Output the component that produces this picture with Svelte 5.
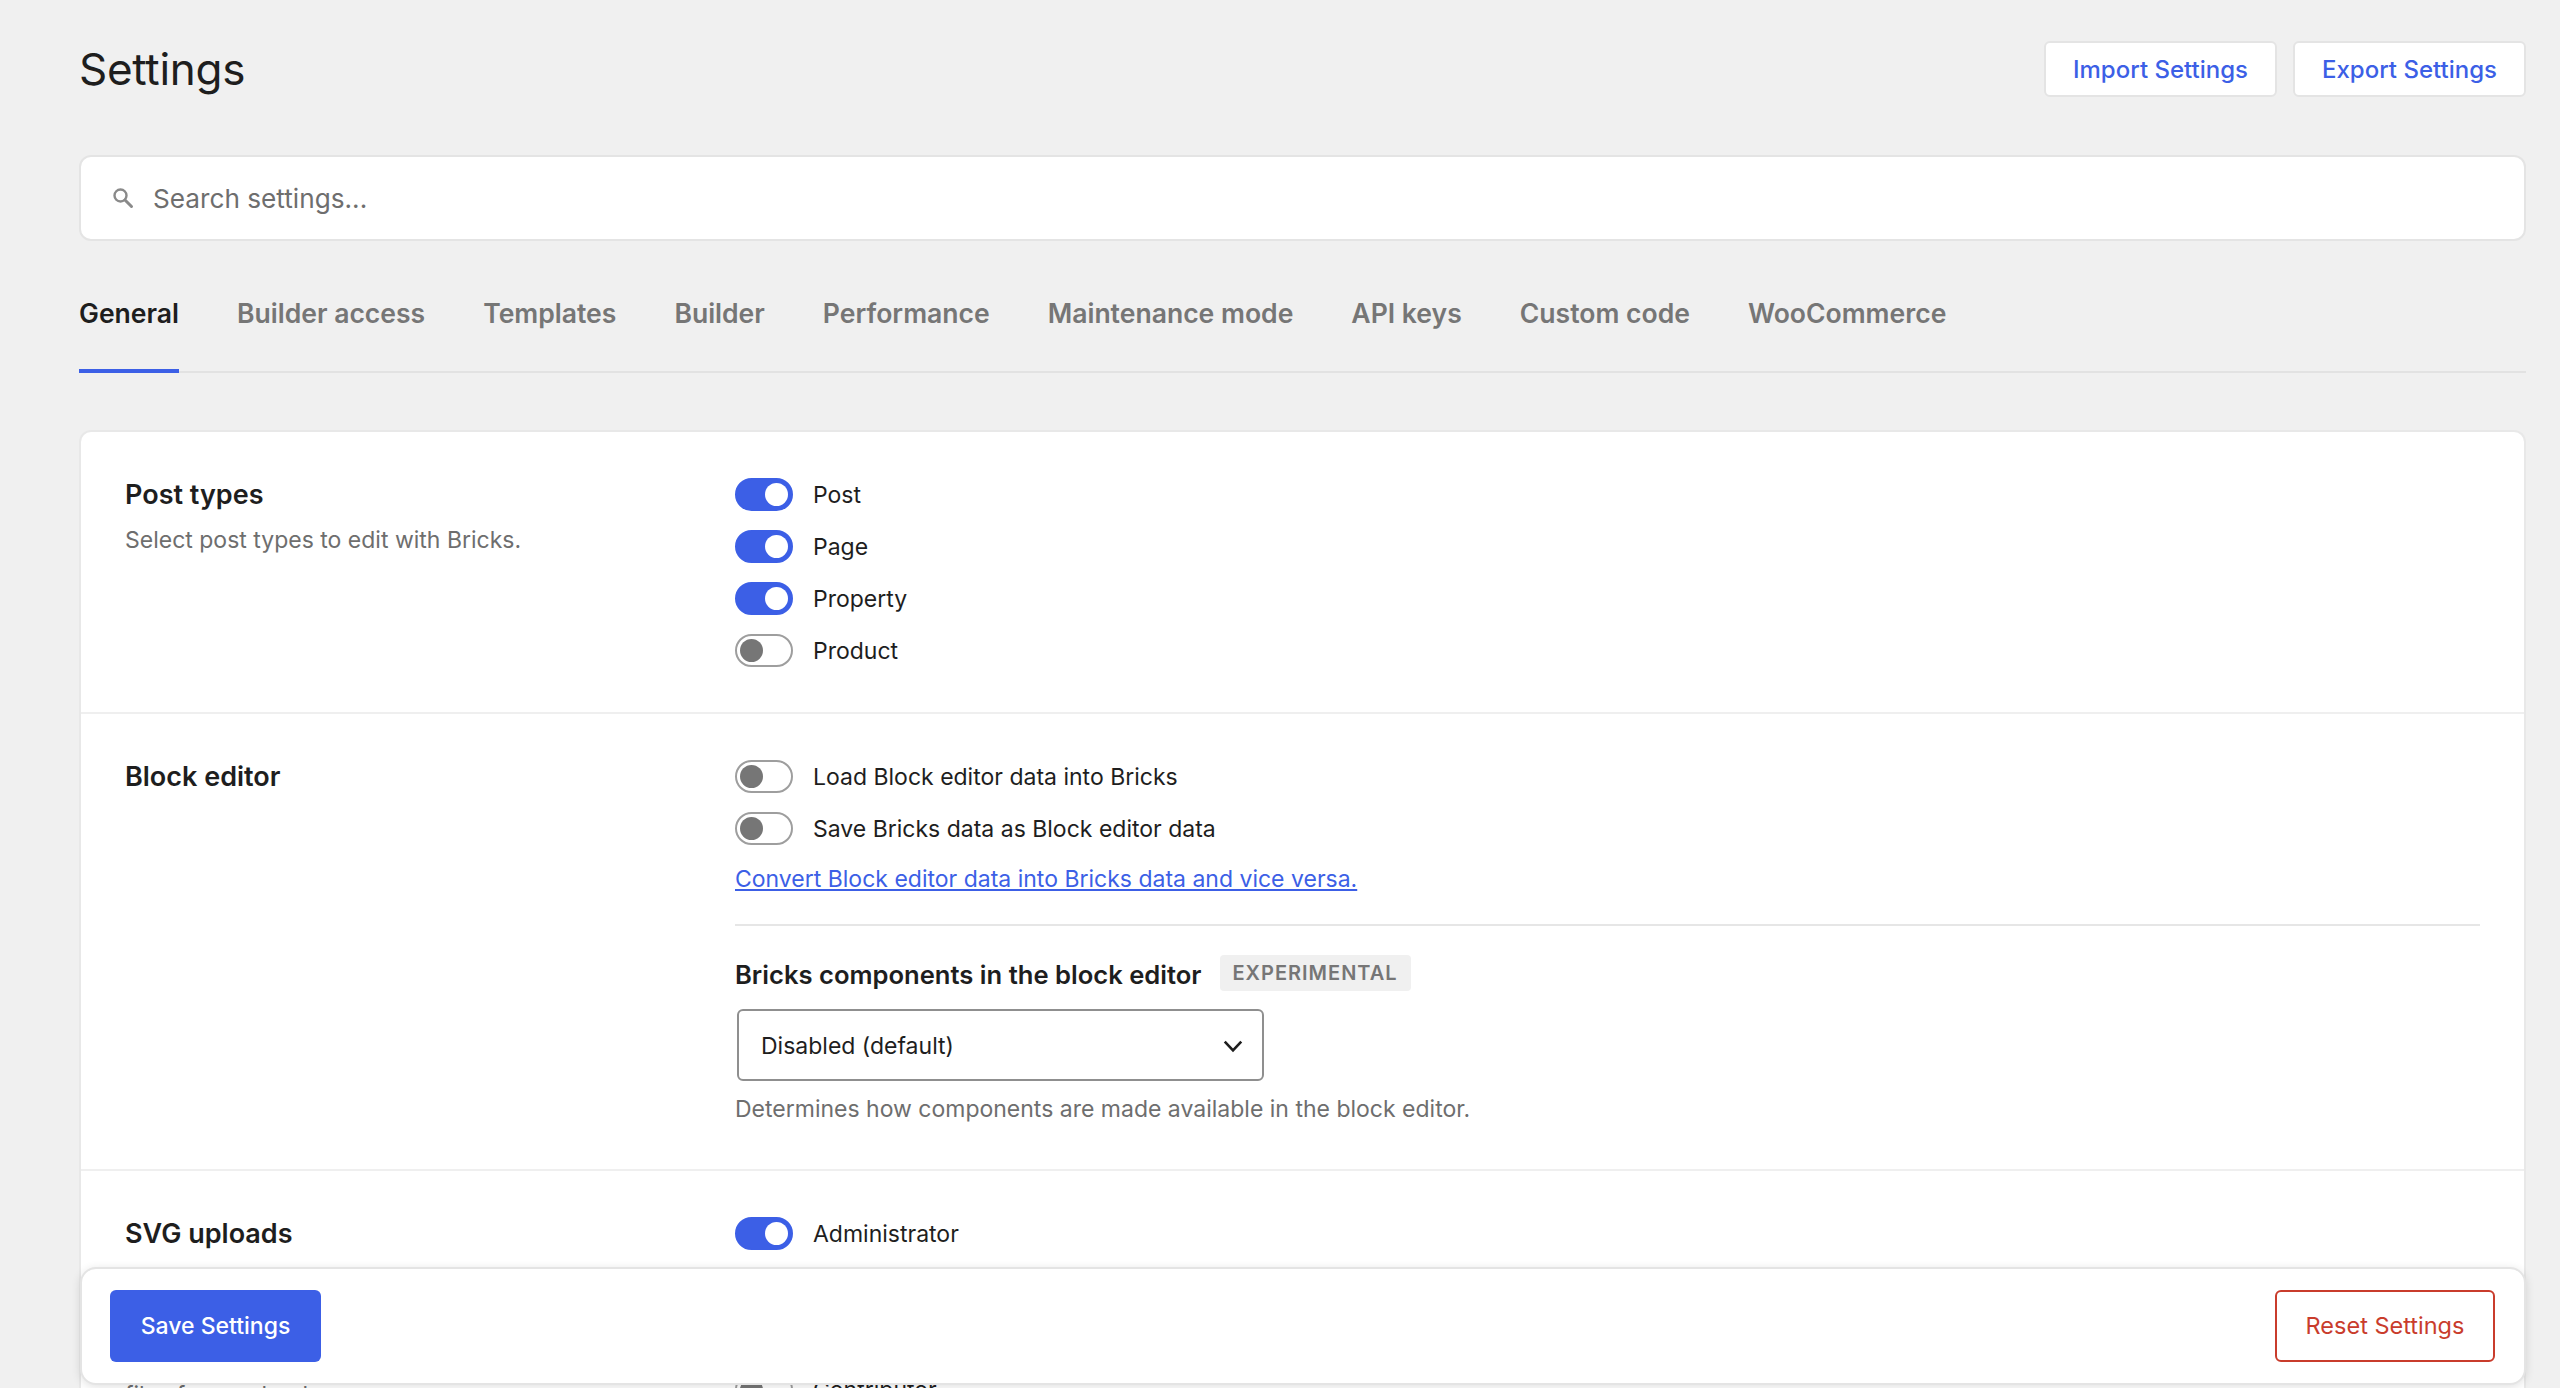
<script>
	const tabs = [
		'General',
		'Builder access',
		'Templates',
		'Builder',
		'Performance',
		'Maintenance mode',
		'API keys',
		'Custom code',
		'WooCommerce'
	];

	const postTypes = [
		{ label: 'Post', on: true },
		{ label: 'Page', on: true },
		{ label: 'Property', on: true },
		{ label: 'Product', on: false }
	];

	const blockEditor = [
		{ label: 'Load Block editor data into Bricks', on: false },
		{ label: 'Save Bricks data as Block editor data', on: false }
	];

	const svgRoles = [
		{ label: 'Administrator', on: true },
		{ label: 'Editor', on: false },
		{ label: 'Author', on: false },
		{ label: 'Contributor', on: false }
	];
</script>

{#snippet toggles(items)}
	<ul class="toggles">
		{#each items as item (item.label)}
			<li class="toggle-row">
				<span class="toggle" class:on={item.on}></span>
				<span class="toggle-label">{item.label}</span>
			</li>
		{/each}
	</ul>
{/snippet}

<div class="page">
	<header class="top">
		<h1>Settings</h1>
		<div class="top-actions">
			<button class="btn-light">Import Settings</button>
			<button class="btn-light">Export Settings</button>
		</div>
	</header>

	<div class="search">
		<svg class="search-icon" viewBox="0 0 24 24" width="24" height="24" aria-hidden="true">
			<circle cx="9.5" cy="9.5" r="6" fill="none" stroke="#8a8a8a" stroke-width="2.4" />
			<path d="M14 14l6.5 6.5" stroke="#8a8a8a" stroke-width="3" stroke-linecap="round" />
		</svg>
		<span>Search settings...</span>
	</div>

	<nav class="tabs">
		{#each tabs as tab, i (tab)}
			<span class="tab" class:active={i === 0}>{tab}</span>
		{/each}
	</nav>

	<main class="card">
		<section class="row row-post">
			<div class="side">
				<h2>Post types</h2>
				<p class="muted">Select post types to edit with Bricks.</p>
			</div>
			<div class="body">
				{@render toggles(postTypes)}
			</div>
		</section>

		<section class="row row-block">
			<div class="side">
				<h2>Block editor</h2>
			</div>
			<div class="body">
				{@render toggles(blockEditor)}
				<a class="convert" href="#convert">Convert Block editor data into Bricks data and vice versa.</a>
				<hr />
				<div class="sub-title">
					<h3>Bricks components in the block editor</h3>
					<span class="badge">EXPERIMENTAL</span>
				</div>
				<div class="select">
					<span>Disabled (default)</span>
					<svg viewBox="0 0 20 20" width="22" height="22" aria-hidden="true">
						<path d="M2.5 6l7.5 8 7.5-8" fill="none" stroke="#1e1e1e" stroke-width="2.4" />
					</svg>
				</div>
				<p class="muted help">Determines how components are made available in the block editor.</p>
			</div>
		</section>

		<section class="row row-svg">
			<div class="side">
				<h2>SVG uploads</h2>
				<p class="muted">Allow the selected user roles to upload SVG files.</p>
				<p class="muted warning">
					SVG files can contain malicious code, only enable<br />
					this for trusted user roles, as it can affect<br />
					files from uploads
				</p>
			</div>
			<div class="body">
				{@render toggles(svgRoles)}
			</div>
		</section>
	</main>

	<footer class="save-bar">
		<button class="btn-save">Save Settings</button>
		<button class="btn-reset">Reset Settings</button>
	</footer>
</div>

<style>
	:global(body) {
		background: #f0f0f0;
		font-family: Inter, 'Liberation Sans', sans-serif;
		color: #1e1e1e;
	}

	.page {
		position: relative;
		box-sizing: border-box;
		height: 100vh;
		overflow: hidden;
		padding: 41px 34px 0 79px;
	}

	.top {
		display: flex;
		justify-content: space-between;
		align-items: center;
		height: 56px;
	}

	h1 {
		margin: 0;
		font-size: 44px;
		font-weight: 400;
		letter-spacing: -0.3px;
	}

	.top-actions {
		display: flex;
		gap: 16px;
	}

	button {
		font: inherit;
		cursor: pointer;
		border-radius: 6px;
	}

	.btn-light {
		width: 233px;
		height: 56px;
		background: #fff;
		border: 2px solid #e4e4e4;
		color: #3c5fe6;
		font-size: 24px;
		font-weight: 500;
	}

	.search {
		display: flex;
		align-items: center;
		gap: 18px;
		height: 86px;
		margin-top: 58px;
		padding-left: 30px;
		background: #fff;
		border: 2px solid #e4e4e4;
		border-radius: 12px;
		box-sizing: border-box;
		font-size: 26.2px;
		color: #6e6e6e;
	}

	.search-icon {
		flex: none;
	}

	.tabs {
		display: flex;
		gap: 58px;
		height: 132px;
		box-sizing: border-box;
		border-bottom: 2px solid #e2e2e2;
		padding-top: 55px;
	}

	.tab {
		height: 77px;
		box-sizing: border-box;
		font-size: 26.55px;
		font-weight: 600;
		line-height: 34px;
		color: #767676;
	}

	.tab.active {
		color: #1e1e1e;
		border-bottom: 4px solid #3c5fe6;
	}

	.card {
		margin-top: 57px;
		background: #fff;
		border: 2px solid #e8e8e8;
		border-bottom: 0;
		border-radius: 12px 12px 0 0;
	}

	.row {
		display: flex;
		border-bottom: 2px solid #efefef;
		padding: 46px 44px 0;
		box-sizing: border-box;
	}

	.row-post {
		height: 282px;
	}

	.row-block {
		height: 457px;
	}

	.side {
		flex: none;
		width: 610px;
	}

	.body {
		flex: 1;
		display: flex;
		flex-direction: column;
		align-items: flex-start;
	}

	h2 {
		margin: 0;
		font-size: 27px;
		font-weight: 600;
		line-height: 34px;
	}

	.muted {
		margin: 10px 0 0;
		font-size: 23px;
		line-height: 36px;
		color: #6e6e6e;
	}

	.warning {
		margin-top: 8px;
	}

	.toggles {
		list-style: none;
		margin: 0;
		padding: 0;
		display: flex;
		flex-direction: column;
		gap: 20px;
	}

	.toggle-row {
		display: flex;
		align-items: center;
		gap: 20px;
		height: 32px;
		font-size: 23px;
	}

	.toggle-label {
		padding-top: 2px;
	}

	.toggle {
		position: relative;
		box-sizing: border-box;
		width: 58px;
		height: 33px;
		border-radius: 17px;
		border: 2px solid #9e9e9e;
		background: #fff;
	}

	.toggle::after {
		content: '';
		position: absolute;
		top: 3px;
		left: 3px;
		width: 23px;
		height: 23px;
		border-radius: 50%;
		background: #767676;
	}

	.toggle.on {
		background: #3c5fe6;
		border-color: #3c5fe6;
	}

	.toggle.on::after {
		left: auto;
		right: 3px;
		background: #fff;
	}

	.convert {
		margin-top: 19px;
		font-size: 23px;
		line-height: 32px;
		color: #3c5fe6;
	}

	hr {
		align-self: stretch;
		margin: 29px 0 0;
		border: 0;
		border-top: 2px solid #e6e6e6;
	}

	.sub-title {
		display: flex;
		align-items: center;
		gap: 18px;
		margin-top: 29px;
		height: 38px;
	}

	h3 {
		margin: 0;
		font-size: 25.6px;
		font-weight: 600;
	}

	.badge {
		display: flex;
		align-items: center;
		height: 36px;
		padding: 0 13px;
		margin-top: -2px;
		background: #f0f0f0;
		border-radius: 4px;
		font-size: 20px;
		font-weight: 600;
		letter-spacing: 1px;
		color: #767676;
	}

	.select {
		display: flex;
		justify-content: space-between;
		align-items: center;
		box-sizing: border-box;
		width: 527px;
		height: 72px;
		margin: 16px 0 0 2px;
		padding: 2px 18px 0 22px;
		border: 2px solid #8f8f8f;
		border-radius: 6px;
		font-size: 23px;
	}

	.help {
		margin-top: 10px;
	}

	.save-bar {
		position: absolute;
		left: 80px;
		right: 34px;
		top: 1267px;
		height: 118px;
		box-sizing: border-box;
		display: flex;
		justify-content: space-between;
		align-items: center;
		padding: 0 29px 0 28px;
		background: #fff;
		border: 2px solid #e4e4e4;
		border-radius: 16px;
		box-shadow: 0 2px 10px rgba(0, 0, 0, 0.12);
	}

	.btn-save {
		width: 211px;
		height: 72px;
		padding-bottom: 2px;
		background: #3c5fe6;
		border: 0;
		color: #fff;
		font-size: 23px;
		font-weight: 500;
	}

	.btn-reset {
		width: 220px;
		height: 72px;
		padding-bottom: 2px;
		background: #fff;
		border: 2px solid #c93c2c;
		color: #c93c2c;
		font-size: 23.5px;
	}
</style>
